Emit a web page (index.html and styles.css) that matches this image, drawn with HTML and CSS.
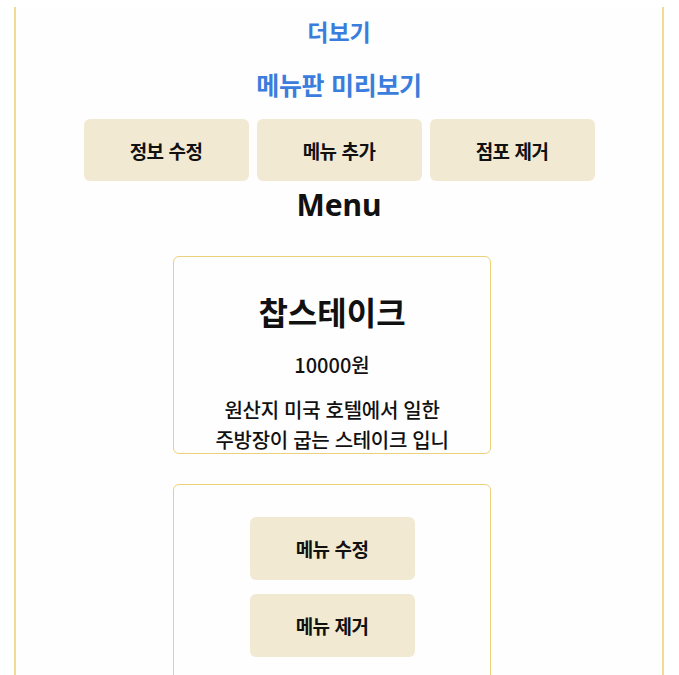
FILE: index.html
```html
<!DOCTYPE html>
<html lang="ko">
<head>
<meta charset="utf-8">
<title>Menu</title>
<link rel="stylesheet" href="styles.css">
</head>
<body>
<div class="page">
  <a class="link link-more" href="#">더보기</a>
  <a class="link link-preview" href="#">메뉴판 미리보기</a>
  <div class="actions">
    <button class="btn">정보 수정</button>
    <button class="btn">메뉴 추가</button>
    <button class="btn">점포 제거</button>
  </div>
  <h2 class="menu-title">Menu</h2>
  <div class="menu-list">
    <div class="card card-info">
      <div class="dish">찹스테이크</div>
      <div class="price">10000원</div>
      <div class="desc">원산지 미국 호텔에서 일한 주방장이 굽는 스테이크 입니다</div>
    </div>
    <div class="card card-actions">
      <button class="btn btn-card">메뉴 수정</button>
      <button class="btn btn-card">메뉴 제거</button>
    </div>
  </div>
</div>
</body>
</html>
```

FILE: styles.css
```css
html, body {
  margin: 0;
  padding: 0;
  background: #ffffff;
}
body {
  font-family: "Noto Sans CJK KR", "Noto Sans", sans-serif;
  color: #111111;
  overflow: hidden;
}
.page {
  width: 646px;
  margin: 7px 0 0 14px;
  min-height: 700px;
  border-left: 2px solid #f0dc92;
  border-right: 2px solid #f0dc92;
  background: #fefefe;
  display: flex;
  flex-direction: column;
  align-items: center;
  padding-top: 9px;
  box-sizing: content-box;
}
.link {
  display: block;
  color: #3b7ddd;
  text-decoration: none;
  font-weight: 700;
  line-height: 30px;
  height: 30px;
}
.link-more {
  font-size: 23px;
}
.link-preview {
  font-size: 25px;
  letter-spacing: -0.3px;
  margin-top: 23px;
}
.actions {
  display: flex;
  gap: 8px;
  margin-top: 20px;
}
.btn {
  width: 165px;
  height: 62px;
  border: none;
  border-radius: 6px;
  background: #f2e9d3;
  font-family: "Noto Sans CJK KR", "Noto Sans", sans-serif;
  font-size: 19px;
  font-weight: 700;
  color: #111111;
  letter-spacing: -0.5px;
  padding: 0;
}
.menu-title {
  margin: 4px 0 0;
  font-size: 30px;
  line-height: 40px;
  font-weight: 700;
  font-family: "Noto Sans", "Noto Sans CJK KR", sans-serif;
}
.menu-list {
  align-self: stretch;
  display: flex;
  flex-direction: column;
  gap: 30px;
  margin-top: 31px;
  padding-left: 157px;
}
.card {
  width: 318px;
  height: 198px;
  box-sizing: border-box;
  border: 1px solid #ebd27a;
  border-radius: 6px;
  overflow: hidden;
  text-align: center;
}
.card-info {
  padding: 34px 40px 0;
}
.dish {
  font-size: 32px;
  font-weight: 700;
  line-height: 40px;
}
.price {
  margin-top: 19px;
  font-size: 20px;
  font-weight: 500;
  line-height: 30px;
}
.desc {
  margin-top: 15px;
  font-size: 20px;
  font-weight: 500;
  line-height: 30px;
  letter-spacing: -0.3px;
}
.card-actions {
  display: flex;
  flex-direction: column;
  align-items: center;
  gap: 14px;
  padding-top: 32px;
}
.btn-card {
  height: 63px;
}
```
